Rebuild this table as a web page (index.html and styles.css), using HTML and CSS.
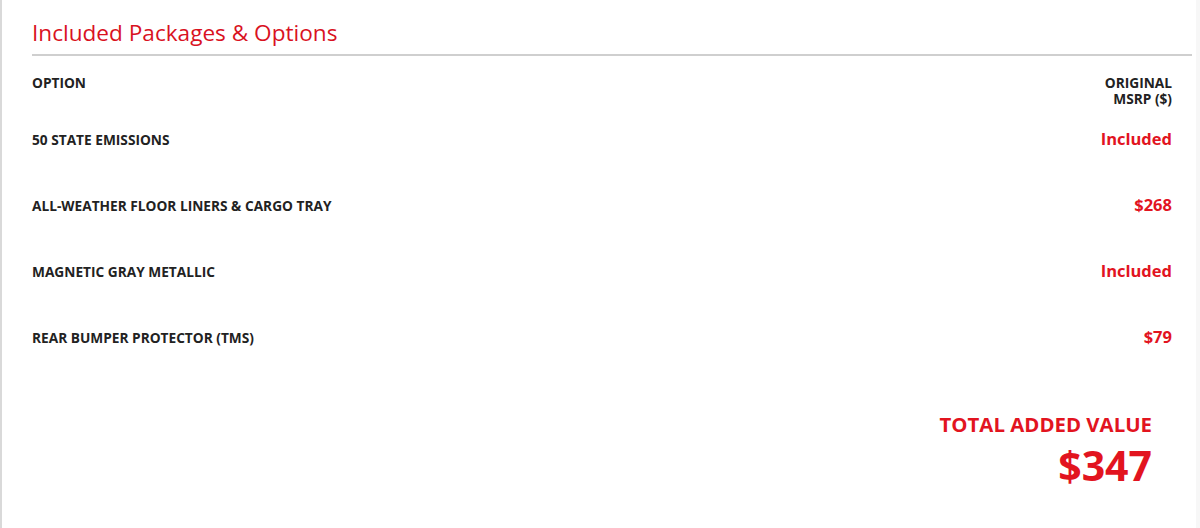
FILE: index.html
```html
<!DOCTYPE html>
<html lang="en">
<head>
  <meta charset="UTF-8">
  <title>Included Packages &amp; Options</title>
  <meta name="viewport" content="width=device-width, initial-scale=1">
  <link rel="stylesheet" href="styles.css">
</head>
<body>

<div class="panel">
  <h2 class="panel-title">Included Packages &amp; Options</h2>

  <div class="options">
    <div class="options-head">
      <span>OPTION</span>
      <span class="msrp-head">ORIGINAL<br>MSRP ($)</span>
    </div>

    <div class="option-row">
      <span class="option-name">50 STATE EMISSIONS</span>
      <span class="option-price">Included</span>
    </div>
    <div class="option-row">
      <span class="option-name">ALL-WEATHER FLOOR LINERS &amp; CARGO TRAY</span>
      <span class="option-price">$268</span>
    </div>
    <div class="option-row">
      <span class="option-name">MAGNETIC GRAY METALLIC</span>
      <span class="option-price">Included</span>
    </div>
    <div class="option-row">
      <span class="option-name">REAR BUMPER PROTECTOR (TMS)</span>
      <span class="option-price">$79</span>
    </div>
  </div>

  <div class="total">
    <div class="total-label">TOTAL ADDED VALUE</div>
    <div class="total-value">$347</div>
  </div>
</div>

</body>
</html>
```

FILE: styles.css
```css
* { box-sizing: border-box; margin: 0; padding: 0; }

body {
  font-family: "Open Sans", "Liberation Sans", sans-serif;
  background: #f7f7f7;
  color: #222;
  height: 528px;
  overflow: hidden;
}

.panel {
  background: #fff;
  border-left: 2px solid #d9d9d9;
  margin-right: 4px;
  padding: 0 4px 0 30px;
  height: 528px;
}

.panel-title {
  font-size: 22.6px;
  font-weight: 400;
  line-height: 30px;
  color: #d9121f;
  padding: 18px 0 6px;
  border-bottom: 2px solid #cfcfcf;
}

.options {
  padding: 19px 20px 0 0;
}

.options-head {
  display: flex;
  justify-content: space-between;
  align-items: flex-start;
  font-size: 13.7px;
  font-weight: 700;
  line-height: 16px;
  margin-bottom: 20px;
}

.msrp-head {
  text-align: right;
}

.option-row {
  display: flex;
  justify-content: space-between;
  align-items: baseline;
  height: 66px;
}

.option-name {
  font-size: 13.7px;
  font-weight: 700;
  line-height: 24px;
}

.option-price {
  font-size: 16.5px;
  font-weight: 700;
  line-height: 24px;
  color: #e2141f;
}

.total {
  text-align: right;
  padding: 18px 40px 0 0;
  color: #e2141f;
  font-weight: 700;
}

.total-label {
  font-size: 20.4px;
  line-height: 30px;
}

.total-value {
  font-size: 41px;
  line-height: 48px;
  margin-top: 2px;
}
```
